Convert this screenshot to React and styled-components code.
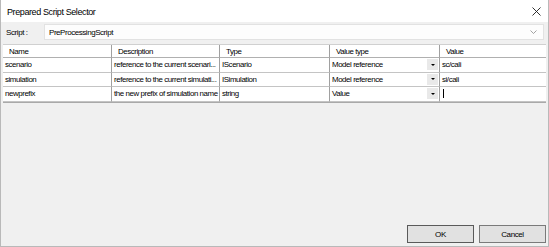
import React from "react";
import styled, { createGlobalStyle } from "styled-components";

const GlobalStyle = createGlobalStyle`
  html, body {
    margin: 0;
    padding: 0;
    background: #ffffff;
  }
  * {
    box-sizing: border-box;
  }
`;

const columns = ["Name", "Description", "Type", "Value type", "Value"];

const rows = [
  {
    name: "scenario",
    description: "reference to the current scenari...",
    type: "IScenario",
    valueType: "Model reference",
    value: "sc/cali",
  },
  {
    name: "simulation",
    description: "reference to the current simulati...",
    type: "ISimulation",
    valueType: "Model reference",
    value: "si/cali",
  },
  {
    name: "newprefix",
    description: "the new prefix of simulation name",
    type: "string",
    valueType: "Value",
    value: "",
    editing: true,
  },
];

const Window = styled.div`
  width: 549px;
  height: 247px;
  display: flex;
  flex-direction: column;
  border: 1px solid #b9b9b9;
  border-top: none;
  font-family: "Liberation Sans", Arial, sans-serif;
  color: #000;
  background: #f0f0f0;
`;

const TitleBar = styled.div`
  height: 22px;
  flex: none;
  background: #ffffff;
  display: flex;
  align-items: center;
  justify-content: space-between;
  padding: 0 7px 0 6px;
`;

const Title = styled.span`
  font-size: 9px;
  letter-spacing: -0.4px;
  padding-top: 1px;
`;

const CloseButton = styled.div`
  width: 10px;
  height: 10px;
  display: flex;
  align-items: center;
  justify-content: center;
`;

const Body = styled.div`
  flex: 1;
  display: flex;
  flex-direction: column;
  padding: 2px 2px 3px 1px;
`;

const ScriptRow = styled.div`
  display: flex;
  align-items: center;
  height: 16px;
  margin-bottom: 4px;
`;

const Label = styled.span`
  width: 42px;
  padding-left: 4px;
  font-size: 8px;
  letter-spacing: -0.4px;
`;

const Combo = styled.div`
  flex: 1;
  height: 16px;
  margin-right: 2px;
  background: #fdfdfd;
  border: 1px solid #e2e2e2;
  display: flex;
  align-items: center;
  justify-content: space-between;
  padding: 0 6px 0 4px;
  font-size: 8px;
  letter-spacing: -0.45px;
`;

const Grid = styled.div`
  display: grid;
  grid-template-columns: 109px 108px 110px 110px 1fr;
  margin-left: 1px;
  background: #ffffff;
  border-top: 1px solid #d0d0d0;
  border-bottom: 1px solid #a9a9a9;
`;

const Cell = styled.div`
  height: ${(p) => (p.$header ? "13px" : "14.5px")};
  display: flex;
  align-items: center;
  padding-left: ${(p) => (p.$header ? "6px" : "2px")};
  font-size: 7.9px;
  letter-spacing: -0.42px;
  white-space: nowrap;
  overflow: hidden;
  border-bottom: 1px solid ${(p) => (p.$header ? "#b0b0b0" : "#c4c4c4")};
  border-right: 1px solid #a0a0a0;
  &:nth-child(5n) {
    border-right: none;
  }
`;

const SelectCell = styled(Cell)`
  justify-content: space-between;
  padding-right: 1px;
`;

const DropButton = styled.div`
  width: 11px;
  height: 11px;
  background: #e9e9e9;
  display: flex;
  align-items: center;
  justify-content: center;
`;

const Caret = styled.div`
  width: 0;
  height: 0;
  border-left: 2px solid transparent;
  border-right: 2px solid transparent;
  border-top: 2px solid #000;
`;

const TextCursor = styled.span`
  display: inline-block;
  width: 1px;
  height: 9px;
  background: #000;
  margin-left: 1px;
`;

const Spacer = styled.div`
  flex: 1;
`;

const ButtonRow = styled.div`
  display: flex;
  justify-content: flex-end;
  gap: 5px;
`;

const Button = styled.button`
  width: 67px;
  height: 18px;
  background: #e1e1e1;
  border: 1px solid ${(p) => (p.$primary ? "#5a5a5a" : "#7a7a7a")};
  font-family: "Liberation Sans", Arial, sans-serif;
  font-size: 8px;
  letter-spacing: -0.4px;
  color: #000;
  padding: 0;
`;

const Chevron = () => (
  <svg width="7" height="4" viewBox="0 0 7 4">
    <path d="M0.5 0.5 L3.5 3.5 L6.5 0.5" fill="none" stroke="#8c8c8c" strokeWidth="0.8" />
  </svg>
);

const CloseIcon = () => (
  <svg width="9" height="9" viewBox="0 0 9 9">
    <path d="M0.5 0.5 L8.5 8.5 M8.5 0.5 L0.5 8.5" stroke="#1a1a1a" strokeWidth="0.9" />
  </svg>
);

export default function App() {
  return (
    <>
      <GlobalStyle />
      <Window>
        <TitleBar>
          <Title>Prepared Script Selector</Title>
          <CloseButton>
            <CloseIcon />
          </CloseButton>
        </TitleBar>
        <Body>
          <ScriptRow>
            <Label>Script :</Label>
            <Combo>
              <span>PreProcessingScript</span>
              <Chevron />
            </Combo>
          </ScriptRow>
          <Grid>
            {columns.map((c) => (
              <Cell key={c} $header>
                {c}
              </Cell>
            ))}
            {rows.map((r) => (
              <React.Fragment key={r.name}>
                <Cell>{r.name}</Cell>
                <Cell>{r.description}</Cell>
                <Cell>{r.type}</Cell>
                <SelectCell>
                  <span>{r.valueType}</span>
                  <DropButton>
                    <Caret />
                  </DropButton>
                </SelectCell>
                <Cell>{r.editing ? <TextCursor /> : r.value}</Cell>
              </React.Fragment>
            ))}
          </Grid>
          <Spacer />
          <ButtonRow>
            <Button $primary>OK</Button>
            <Button>Cancel</Button>
          </ButtonRow>
        </Body>
      </Window>
    </>
  );
}
